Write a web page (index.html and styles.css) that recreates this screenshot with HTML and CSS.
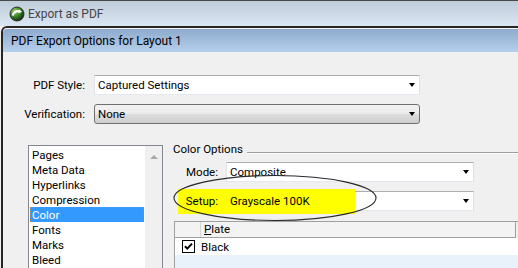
FILE: index.html
```html
<!DOCTYPE html>
<html lang="en">
<head>
  <meta charset="UTF-8">
  <title>Export as PDF</title>
  <link rel="stylesheet" href="styles.css">
</head>
<body>
  <div class="titlebar">
    <svg class="app-icon" width="16" height="16" viewBox="0 0 16 16">
      <defs>
        <radialGradient id="globe" cx="0.35" cy="0.3" r="0.8">
          <stop offset="0" stop-color="#9fd36a"/>
          <stop offset="0.45" stop-color="#3c8a2a"/>
          <stop offset="1" stop-color="#0c1a0a"/>
        </radialGradient>
      </defs>
      <circle cx="8" cy="8" r="7" fill="url(#globe)" stroke="#1a1a1a" stroke-width="0.8"/>
      <path d="M3.5 9.5 C5 6 8 4.5 11 5.5" fill="none" stroke="#fff" stroke-width="2"/>
      <path d="M10 3.2 L13 5.8 L9.6 7.4 Z" fill="#fff"/>
    </svg>
    <span class="titlebar-text">Export as PDF</span>
  </div>

  <div class="window">
    <div class="window-title">PDF Export Options for Layout 1</div>
    <div class="content">
      <div class="form-row">
        <label class="form-label">PDF Style:</label>
        <div class="select select-wide">
          <span class="select-value">Captured Settings</span>
          <span class="arrow"></span>
        </div>
      </div>
      <div class="form-row">
        <label class="form-label">Verification:</label>
        <div class="select select-wide select-button">
          <span class="select-value">None</span>
          <span class="arrow"></span>
        </div>
      </div>

      <div class="lower">
        <div class="listbox">
          <ul class="list-items">
            <li>Pages</li>
            <li>Meta Data</li>
            <li>Hyperlinks</li>
            <li>Compression</li>
            <li class="selected">Color</li>
            <li>Fonts</li>
            <li>Marks</li>
            <li>Bleed</li>
          </ul>
          <div class="scrollbar"><span class="scroll-up"></span></div>
        </div>

        <div class="group">
          <div class="group-legend">
            <span>Color Options</span>
            <span class="group-line"></span>
          </div>
          <div class="form-row group-row">
            <label class="form-label group-label">Mode:</label>
            <div class="select select-mid">
              <span class="select-value">Composite</span>
              <span class="arrow"></span>
            </div>
          </div>
          <div class="form-row group-row">
            <label class="form-label group-label on-top">Setup:</label>
            <div class="select select-mid">
              <span class="select-value on-top">Grayscale 100K</span>
              <span class="arrow"></span>
            </div>
          </div>

          <div class="plates">
            <div class="plates-head">
              <span class="col-check"></span>
              <span class="col-name"><u>P</u>late</span>
            </div>
            <div class="plates-row">
              <span class="col-check">
                <span class="checkbox">
                  <svg width="9" height="9" viewBox="0 0 9 9"><path d="M1 4.2 L3.3 6.6 L8 1.6" fill="none" stroke="#000" stroke-width="2"/></svg>
                </span>
              </span>
              <span class="col-name">Black</span>
            </div>
            <div class="plates-empty"></div>
          </div>
        </div>
      </div>
    </div>
  </div>

  <div class="highlight"></div>
  <svg class="ellipse" width="206" height="50" viewBox="0 0 206 50">
    <ellipse cx="102" cy="24" rx="101" ry="22.5" fill="none" stroke="#2a2a2a" stroke-width="1.1"/>
  </svg>
</body>
</html>
```

FILE: styles.css
```css
body {
  margin: 0;
  width: 518px;
  height: 268px;
  overflow: hidden;
  position: relative;
  background-color: #f0f0f0;
  font-family: Roboto, "Noto Sans", sans-serif;
  font-size: 11.5px;
  color: #000;
}

.titlebar {
  height: 25px;
  border-top: 1px solid #4a4a4a;
  background: linear-gradient(#bfccd9, #dbe6f3);
  display: flex;
  align-items: center;
  padding-left: 9px;
  gap: 3px;
}
.titlebar-text {
  font-size: 12px;
  color: #444;
}

.window {
  margin-left: 1px;
  border-top: 2px solid #262626;
  border-left: 2px solid #262626;
  border-top-left-radius: 6px;
  height: 240px;
  overflow: hidden;
}
.window-title {
  height: 23px;
  border-top: 1px solid #f4f4f4;
  border-top-left-radius: 4px;
  background: linear-gradient(#8eabcd, #b6cfec);
  display: flex;
  align-items: center;
  padding-left: 8px;
  font-size: 12px;
}

.content {
  padding-top: 23px;
}

.form-row {
  display: flex;
  align-items: center;
  height: 20px;
}
.form-row + .form-row {
  margin-top: 9px;
}
.form-label {
  width: 82px;
  margin-right: 9px;
  text-align: right;
}

.select {
  height: 18px;
  display: flex;
  align-items: center;
  justify-content: space-between;
  background: #fff;
  border: 1px solid;
  border-color: #abadb3 #dbdfe6 #e3e9ef #e2e3ea;
  padding: 0 3px 0 3px;
}
.select-wide {
  width: 318px;
}
.select-button {
  border: 1px solid #707070;
  border-radius: 3px;
  background: linear-gradient(#f2f2f2 0, #ebebeb 50%, #dddddd 50%, #cfcfcf 100%);
}
.select-mid {
  width: 240px;
}
.arrow {
  width: 0;
  height: 0;
  margin-right: 1px;
  border-left: 3.5px solid transparent;
  border-right: 3.5px solid transparent;
  border-top: 4px solid #000;
}

.lower {
  margin-top: 17px;
  display: flex;
}

.listbox {
  margin-left: 25px;
  margin-top: 4px;
  width: 133px;
  height: 140px;
  border: 1px solid #828790;
  background: #fff;
  display: flex;
}
.list-items {
  list-style: none;
  margin: 0;
  padding: 1px 1px 0 1px;
  width: 114px;
}
.list-items li {
  height: 15px;
  line-height: 14px;
  padding-left: 1px;
  border: 1px solid transparent;
  box-sizing: border-box;
}
.list-items li.selected {
  background: #3399ff;
  color: #fff;
  border: 1px dotted #c0803a;
}
.scrollbar {
  width: 17px;
  background: #f0f0f0;
  display: flex;
  justify-content: center;
}
.scroll-up {
  margin-top: 9px;
  width: 0;
  height: 0;
  border-left: 4px solid transparent;
  border-right: 4px solid transparent;
  border-bottom: 4px solid #a8a8a8;
}

.group {
  flex: 1;
}
.group-legend {
  height: 15px;
  display: flex;
  align-items: center;
  padding-left: 10px;
  gap: 4px;
}
.group-line {
  flex: 1;
  height: 0;
  margin-top: 8px;
  border-top: 1px solid #a0a0a0;
  border-bottom: 1px solid #fff;
}
.group-legend + .group-row {
  margin-top: 6px;
}
.group-label {
  width: 55px;
  margin-right: 8px;
}

.on-top {
  position: relative;
  z-index: 2;
}

.plates {
  margin-top: 10px;
  margin-left: 11px;
  border-top: 1px solid #a0a0a0;
  height: 60px;
}
.plates-head {
  display: flex;
  height: 15px;
  border-right: 1px solid #a0a0a0;
  border-bottom: 1px solid #a0a0a0;
  border-left: 1px solid #a0a0a0;
  margin-right: 2px;
  background: #f3f3f3;
}
.plates-head .col-check {
  width: 25px;
  border-right: 1px solid #d5d5d5;
}
.plates-head .col-name {
  padding-left: 3px;
  line-height: 15px;
}
.plates-row {
  display: flex;
  height: 17px;
  align-items: center;
  background: #fff;
  border-left: 1px solid #a0a0a0;
}
.plates-row .col-check {
  width: 26px;
  display: flex;
  justify-content: center;
}
.checkbox {
  width: 11px;
  height: 11px;
  border: 1px solid #000;
  display: flex;
  align-items: center;
  justify-content: center;
  background: #fff;
}
.plates-empty {
  height: 20px;
  background: #e9f1fb;
  border-left: 1px solid #a0a0a0;
}

.highlight {
  position: absolute;
  left: 178px;
  top: 189px;
  width: 177px;
  height: 25px;
  background: #ffff00;
  z-index: 1;
}
.ellipse {
  position: absolute;
  left: 173px;
  top: 174px;
  z-index: 3;
}
```
